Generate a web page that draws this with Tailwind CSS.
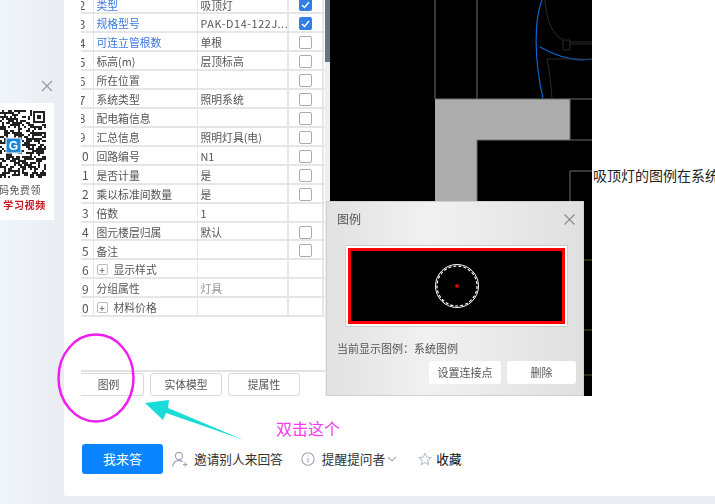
<!DOCTYPE html>
<html lang="zh">
<head>
  <meta charset="UTF-8">
  <title>图例</title>
  <script src="https://cdn.jsdelivr.net/npm/@tailwindcss/browser@4"></script>
</head>
<body class="bg-[#eaeef3] font-['Noto_Sans_CJK_SC','Noto_Sans',sans-serif]">
  <div class="relative w-[715px] h-[504px] overflow-hidden flex">

    <!-- left rail with QR ad -->
    <div class="w-[64px] h-full shrink-0 bg-gradient-to-r from-[#f0f5fc] to-[#e9edf2] pt-[79px]">
      <div class="flex justify-end pr-[10px] h-[24px]">
        <svg width="14" height="14" viewBox="0 0 14 14" class="stroke-[#9a9a9a]"><path d="M2 2 12 12M12 2 2 12" stroke-width="1.2"/></svg>
      </div>
      <div class="w-[54px] h-[117px] bg-white pt-[7px] pr-[8px] flex flex-col items-end overflow-hidden blur-[0.3px]">
        <svg id="qr" width="46" height="68" viewBox="0 0 46 68" class="shrink-0"></svg>
        <div class="text-[10px] leading-[15px] mt-[4px] pr-[5px] text-[#555] whitespace-nowrap tracking-[0.5px]">码免费领</div>
        <div class="text-[10px] leading-[15px] text-[#c4161c] font-bold whitespace-nowrap tracking-[0.7px]">学习视频</div>
      </div>
    </div>

    <!-- question card -->
    <div class="w-[651px] h-[496px] bg-white rounded-bl-[3px] shrink-0 overflow-hidden">
      <div class="flex pl-[17px]">

        <!-- pasted screenshot -->
        <div class="w-[511px] h-[396px] flex shrink-0 overflow-hidden">
          <div class="w-[244px] shrink-0 overflow-hidden flex flex-col text-[10.8px] text-[#555] blur-[0.3px]">
            <div id="rows" class="-mt-[4.5px] h-[374.5px] flex flex-col"></div>
            <div class="border-t-2 border-[#e2e2e2] pt-[1px] flex gap-[6px] -ml-[8px] overflow-visible">
              <div class="w-[71px] h-[23px] border border-[#d8d8d8] rounded-[3px] flex items-center justify-center">图例</div>
              <div class="w-[72px] h-[23px] border border-[#d8d8d8] rounded-[3px] flex items-center justify-center">实体模型</div>
              <div class="w-[72px] h-[23px] border border-[#d8d8d8] rounded-[3px] flex items-center justify-center">提属性</div>
            </div>
          </div>
          <div class="w-[5px] shrink-0 flex flex-col">
            <div class="h-[62px] bg-[#69747e]"></div>
            <div class="flex-1 bg-[#eeeeee]"></div>
          </div>
          <svg width="262" height="396" viewBox="330 0 262 396" class="shrink-0 bg-black" fill="none">
            <path d="M435 99H570V140H477V201H435Z" fill="#adadad"/>
            <path d="M435 0V99M477 0V99M435 99H592M570 99V140M477 140H592M477 140V201M570 201V171H592" stroke="#6e6e6e" stroke-width="1"/>
            <path d="M542 0C534 20 534 60 543 98" stroke="#0a66d0" stroke-width="1.2"/>
            <path d="M540 47C556 56 574 62 592 59" stroke="#0a66d0" stroke-width="1.2"/>
            <path d="M545 0C546 20 552 34 563 40M563 40H570V50H563ZM570 42H592M570 44H592M547 59H592M547 59C550 72 551 86 552 98" stroke="#2a2a2a" stroke-width="1"/>
            <path d="M584 260H592M584 330H592M584 375H592" stroke="#5a5030" stroke-width="1"/>
          </svg>
        </div>

        <div class="pt-[165px] pl-[1px] text-[14px] leading-[20px] text-[#222] whitespace-nowrap">吸顶灯的图例在系统</div>
      </div>

      <!-- action bar -->
      <div class="flex items-center mt-[48px] pl-[18px] text-[12.7px] text-[#333]">
        <div class="w-[81px] h-[30px] bg-[#0a84ff] rounded-[3px] text-white text-[13px] flex items-center justify-center">我来答</div>
        <svg width="16" height="17" viewBox="0 0 16 17" fill="none" stroke="#9aa3b5" stroke-width="1.1" class="ml-[9px]">
          <circle cx="7" cy="5" r="3.6"/>
          <path d="M1 15.5C1 11.5 3.6 9.6 7 9.6C8.6 9.6 9.8 10 10.8 10.8M11 13.5H15.5M13.2 11.3V15.7"/>
        </svg>
        <span class="ml-[6px] whitespace-nowrap">邀请别人来回答</span>
        <svg width="14" height="14" viewBox="0 0 14 14" fill="none" stroke="#9aa3b5" stroke-width="1.1" class="ml-[18px]">
          <circle cx="7" cy="7" r="6.2"/>
          <path d="M7 6V10.5M7 3.4V4.6"/>
        </svg>
        <span class="ml-[7px] whitespace-nowrap">提醒提问者</span>
        <svg width="10" height="6" viewBox="0 0 10 6" fill="none" stroke="#aaa" stroke-width="1.1" class="ml-[2px]"><path d="M1 1 5 5 9 1"/></svg>
        <svg width="14" height="14" viewBox="0 0 15 14" fill="none" stroke="#b4bccb" stroke-width="1.1" class="ml-[21px]">
          <path d="M7.5 1 9.4 5 13.8 5.5 10.5 8.5 11.4 13 7.5 10.8 3.6 13 4.5 8.5 1.2 5.5 5.6 5Z"/>
        </svg>
        <span class="ml-[4px] whitespace-nowrap text-[#111]">收藏</span>
      </div>
    </div>

    <!-- legend dialog over the drawing -->
    <div class="absolute left-[326px] top-[201px] w-[258px] h-[195px] bg-gradient-to-r from-[#e2e2e2] via-[#f1f1f1] via-40% to-[#e0e0e0] border border-[#d0d0d0] text-[#555] blur-[0.2px]">
      <div class="flex items-center justify-between pl-[10px] pr-[7px] h-[34px] text-[12px]">
        <span>图例</span>
        <svg width="13" height="13" viewBox="0 0 13 13" stroke="#888" stroke-width="1.1"><path d="M1.5 1.5 11.5 11.5M11.5 1.5 1.5 11.5"/></svg>
      </div>
      <div class="mt-[9px] ml-[18px] w-[223px] h-[82px] bg-white border border-[#ccc] p-[2px]">
        <div class="w-full h-full bg-black border-[3px] border-[#ff0000] flex items-center justify-center">
          <svg width="46" height="46" viewBox="0 0 46 46" fill="none">
            <circle cx="23" cy="23" r="21.5" stroke="#fff" stroke-width="1"/>
            <circle cx="23" cy="23" r="20" stroke="#fff" stroke-width="1.2" stroke-dasharray="3 2"/>
            <circle cx="23" cy="23" r="1.8" fill="#ff0000"/>
          </svg>
        </div>
      </div>
      <div class="mt-[13px] pl-[10px] text-[11px] leading-[16px] whitespace-nowrap">当前显示图例：系统图例</div>
      <div class="mt-[5px] flex justify-end gap-[6px] pr-[7px] text-[11px]">
        <div class="w-[72px] h-[23px] bg-white rounded-[3px] flex items-center justify-center">设置连接点</div>
        <div class="w-[69px] h-[23px] bg-white rounded-[3px] flex items-center justify-center">删除</div>
      </div>
    </div>

    <!-- hand drawn annotations -->
    <svg width="715" height="504" viewBox="0 0 715 504" fill="none" class="absolute inset-0 pointer-events-none">
      <ellipse cx="96" cy="378" rx="37.5" ry="43.5" stroke="#f01cf0" stroke-width="2.5"/>
      <path d="M145 403 169 400 168 408 244 440 166 413 163 420Z" fill="#19dcd9"/>
    </svg>
    <div class="absolute left-[276px] top-[417px] text-[16px] leading-[22px] text-[#f63bf0] whitespace-nowrap">双击这个</div>
  </div>

  <script>
    const filas = [
      ["2", "类型", "吸顶灯", 2, "blue"],
      ["3", "规格型号", "PAK-D14-122J...", 2, "blue"],
      ["4", "可连立管根数", "单根", 1, "blue"],
      ["5", "标高(m)", "层顶标高", 1],
      ["6", "所在位置", "", 1],
      ["7", "系统类型", "照明系统", 1],
      ["8", "配电箱信息", "", 1],
      ["9", "汇总信息", "照明灯具(电)", 1],
      ["10", "回路编号", "N1", 1],
      ["11", "是否计量", "是", 1],
      ["12", "乘以标准间数量", "是", 1],
      ["13", "倍数", "1", 0],
      ["14", "图元楼层归属", "默认", 1],
      ["15", "备注", "", 1],
      ["16", "+显示样式", "", 0],
      ["19", "分组属性", "灯具", 0, "gray"],
      ["20", "+材料价格", "", 0]
    ];
    const check = `<span class="w-[13px] h-[13px] rounded-[2px] bg-[#2f7fe6] flex items-center justify-center"><svg width="9" height="8" viewBox="0 0 9 8" fill="none" stroke="#fff" stroke-width="1.4"><path d="M1 4 3.5 6.5 8 1"/></svg></span>`;
    const empty = `<span class="w-[13px] h-[13px] rounded-[2px] border border-[#aaaaaa] bg-white"></span>`;
    const plus = `<span class="w-[11px] h-[11px] mr-[6px] rounded-[2px] border border-[#bbbbbb] flex items-center justify-center text-[10px] leading-none">+</span>`;
    document.getElementById("rows").innerHTML = filas.map(([n, nombre, valor, caja, tono]) => `
      <div class="h-[18.93px] shrink-0 flex items-center border-b-2 border-[#e6e6e6] leading-none">
        <div class="w-[11px] h-full shrink-0 pt-[2px] flex items-center overflow-hidden"><span class="w-[22px] -ml-[10px] shrink-0 text-center text-[12px]">${n}</span></div>
        <div class="w-[104px] h-full shrink-0 pt-[2px] flex items-center pl-[3px] ml-[0.5px] border-l border-[#e6e6e6] whitespace-nowrap ${tono === "blue" ? "text-[#3b78e0]" : ""}">${nombre.startsWith("+") ? plus + nombre.slice(1) : nombre}</div>
        <div class="w-[90px] h-full shrink-0 pt-[2px] flex items-center pl-[3px] border-l border-[#e6e6e6] whitespace-nowrap overflow-hidden ${tono === "gray" ? "text-[#999999]" : ""} ${valor.startsWith("PAK") ? "tracking-[0.6px]" : ""}">${valor}</div>
        <div class="w-[37px] h-full shrink-0 pt-[2px] flex items-center justify-center border-x-2 border-[#e6e6e6]">${caja === 2 ? check : caja === 1 ? empty : ""}</div>
      </div>`).join("");

    // QR modules, only a look-alike
    let s = "", seed = 7;
    const rnd = () => (seed = (seed * 16807) % 2147483647) / 2147483647;
    for (let y = 0; y < 34; y++) for (let x = 0; x < 23; x++) {
      if (rnd() > 0.5) s += `<rect x="${x * 2}" y="${y * 2}" width="2" height="2" fill="#222"/>`;
    }
    s += `<rect x="32" y="0" width="14" height="14" fill="#fff"/><rect x="33" y="1" width="12" height="12" fill="#222"/><rect x="35" y="3" width="8" height="8" fill="#fff"/><rect x="37" y="5" width="4" height="4" fill="#222"/>`;
    s += `<rect x="6" y="28" width="15" height="15" fill="#1e88d8" stroke="#fff"/><text x="13.5" y="40" font-size="12" font-weight="700" text-anchor="middle" fill="#fff" font-family="Liberation Sans">G</text>`;
    document.getElementById("qr").innerHTML = s;
  </script>
</body>
</html>
